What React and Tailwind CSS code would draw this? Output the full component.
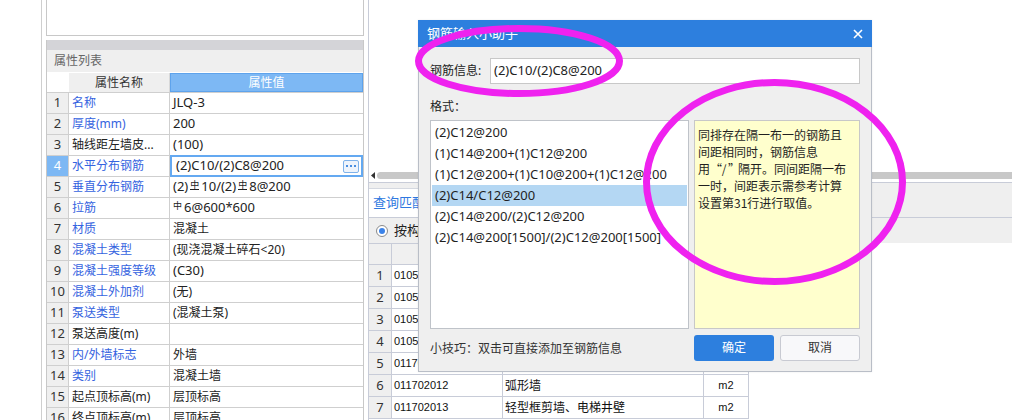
import React from "react";

const leftRows = [
  ["1", "名称", true, "JLQ-3"],
  ["2", "厚度(mm)", true, "200"],
  ["3", "轴线距左墙皮...", false, "(100)"],
  ["4", "水平分布钢筋", true, "(2)C10/(2)C8@200"],
  ["5", "垂直分布钢筋", true, "SYM5"],
  ["6", "拉筋", true, "SYM6"],
  ["7", "材质", true, "混凝土"],
  ["8", "混凝土类型", true, "(现浇混凝土碎石<20)"],
  ["9", "混凝土强度等级", true, "(C30)"],
  ["10", "混凝土外加剂", true, "(无)"],
  ["11", "泵送类型", true, "(混凝土泵)"],
  ["12", "泵送高度(m)", false, ""],
  ["13", "内/外墙标志", true, "外墙"],
  ["14", "类别", true, "混凝土墙"],
  ["15", "起点顶标高(m)", false, "层顶标高"],
  ["16", "终点顶标高(m)", false, "层顶标高"],
];

const rightRows = [
  ["1", "010504001", "直形墙", "m3"],
  ["2", "010504002", "弧形墙", "m3"],
  ["3", "010504003", "短肢剪力墙", "m3"],
  ["4", "010504004", "挡土墙", "m3"],
  ["5", "011702011", "直形墙", "m2"],
  ["6", "011702012", "弧形墙", "m2"],
  ["7", "011702013", "轻型框剪墙、电梯井壁", "m2"],
];

const formats = [
  "(2)C12@200",
  "(1)C14@200+(1)C12@200",
  "(1)C12@200+(1)C10@200+(1)C12@200",
  "(2)C14/C12@200",
  "(2)C14@200/(2)C12@200",
  "(2)C14@200[1500]/(2)C12@200[1500]",
];

function Sym({ base }) {
  return (
    <span
      className={
        base
          ? "mx-[2px] inline-block relative -top-[3px] text-[9px] leading-[9px] border-b border-[#222] [font-family:'Noto_Sans_CJK_SC',sans-serif]"
          : "mr-[2px] inline-block relative -top-[3px] text-[9px] leading-[9px] [font-family:'Noto_Sans_CJK_SC',sans-serif]"
      }
    >
      中
    </span>
  );
}

function Value({ v }) {
  if (v === "SYM5")
    return (
      <span className="text-[13px]">
        (2)
        <Sym base />
        10/(2)
        <Sym base />
        8@200
      </span>
    );
  if (v === "SYM6")
    return (
      <span className="text-[13px]">
        <Sym />
        6@600*600
      </span>
    );
  const cjk = /[\u4e00-\u9fff]/.test(v);
  return <span className={cjk ? "text-[12px]" : "text-[13px]"}>{v}</span>;
}

function LeftPanel() {
  return (
    <div className="ml-[4px] w-[318px] shrink-0 flex flex-col">
      <div className="h-[36px] shrink-0 border-x border-b border-[#c8c8c8] bg-white" />
      <div className="mt-[4px] flex-1 shrink-0 flex flex-col border-x border-[#c8c8c8]">
        <div className="h-[10px] shrink-0 bg-[#d4d4d8]" />
        <div className="h-[22px] shrink-0 bg-[#efefef] pl-[7px] text-[12px] leading-[22px] text-[#666]">
          属性列表
        </div>
        <div className="h-[1px] shrink-0 bg-white" />
        <div className="h-[20px] shrink-0 flex border-b border-[#cfcfcf]">
          <div className="w-[22px] bg-white" />
          <div className="w-[101px] bg-[#efefef] border-r border-[#d8d8d8] flex items-center justify-center text-[12px] text-[#333]">
            属性名称
          </div>
          <div className="flex-1 bg-[#7db8f4] border border-[#5ea3ec] flex items-center justify-center text-[12px] text-white">
            属性值
          </div>
        </div>
        {leftRows.map(([n, name, blue, v]) => {
          const active = n === "4";
          return (
            <div key={n} className="h-[21px] shrink-0 flex border-b border-[#cfcfcf]">
              <div
                className={
                  active
                    ? "w-[22px] bg-[#7db8f4] text-white border-r border-[#cfcfcf] flex items-center justify-center text-[13px]"
                    : "w-[22px] bg-[#efefef] text-[#333] border-r border-[#cfcfcf] flex items-center justify-center text-[13px]"
                }
              >
                {n}
              </div>
              <div
                className={
                  blue
                    ? "w-[101px] border-r border-[#cfcfcf] pl-[3px] flex items-center text-[12px] text-[#3563e0] whitespace-nowrap overflow-hidden"
                    : "w-[101px] border-r border-[#cfcfcf] pl-[3px] flex items-center text-[12px] text-[#222] whitespace-nowrap overflow-hidden"
                }
              >
                {name}
              </div>
              {active ? (
                <div className="flex-1 relative flex items-center justify-between pl-[6px] pr-[4px] text-[#222]">
                  <div className="absolute -top-[1px] -bottom-[1px] left-0 right-0 border-2 border-[#64a9f1]" />
                  <Value v={v} />
                  <div className="w-[16px] h-[13px] rounded-[2px] border border-[#7fb2ea] bg-[#eef4fc] flex items-center justify-center gap-[2px]">
                    <span className="w-[2px] h-[2px] bg-[#4a8ee0]" />
                    <span className="w-[2px] h-[2px] bg-[#4a8ee0]" />
                    <span className="w-[2px] h-[2px] bg-[#4a8ee0]" />
                  </div>
                </div>
              ) : (
                <div className="flex-1 pl-[3px] flex items-center text-[#222] whitespace-nowrap overflow-hidden">
                  <Value v={v} />
                </div>
              )}
            </div>
          );
        })}
      </div>
    </div>
  );
}

function RightPanel() {
  return (
    <div className="ml-[4px] flex-1 flex flex-col border-l border-[#c8ccd8]">
      <div className="h-[171px] shrink-0 bg-white" />
      <div className="h-[8px] shrink-0 flex items-center pl-[2px]">
        <svg width="4" height="7" viewBox="0 0 4 7">
          <path d="M4 0 L0 3.5 L4 7 Z" fill="#333" />
        </svg>
        <div className="ml-[2px] flex-1 h-[7px] rounded-l-full bg-[#c8c8c8]" />
      </div>
      <div className="h-[3px] shrink-0" />
      <div className="h-[35px] shrink-0 border-t border-[#c8ccd8] bg-[#efefef] pt-[5px] flex">
        <div className="w-[96px] bg-white border-t border-r border-[#d4d8e0] pl-[4px] flex items-center text-[13px] text-[#2f78e0] whitespace-nowrap">
          查询匹配清单
        </div>
      </div>
      <div className="h-[26px] shrink-0 border-t border-[#c8ccd8] bg-[#efefef] pl-[7px] flex items-center gap-[6px]">
        <span className="w-[12px] h-[12px] rounded-full border border-[#8a8a8a] bg-white flex items-center justify-center">
          <span className="w-[6px] h-[6px] rounded-full bg-[#3b82e8]" />
        </span>
        <span className="text-[13px] text-[#222]">按构件类型过滤</span>
      </div>
      <div className="w-[380px] shrink-0 border-t border-[#c8ccd8] flex flex-col">
        <div className="h-[21px] shrink-0 flex border-b border-[#c8ccd8] bg-[#f0f0f0] text-[12px] text-[#333]">
          <div className="w-[23px] border-r border-[#c8ccd8]" />
          <div className="w-[111px] border-r border-[#c8ccd8] flex items-center justify-center">编码</div>
          <div className="w-[201px] border-r border-[#c8ccd8] flex items-center justify-center">名称</div>
          <div className="w-[45px] border-r border-[#c8ccd8] flex items-center justify-center">单位</div>
        </div>
        {rightRows.map(([n, code, desc, unit]) => (
          <div key={n} className="h-[22px] shrink-0 flex border-b border-[#c8ccd8]">
            <div className="w-[23px] bg-[#efefef] border-r border-[#c8ccd8] flex items-center justify-center text-[13px] text-[#333]">
              {n}
            </div>
            <div className="w-[111px] border-r border-[#c8ccd8] pl-[2px] flex items-center text-[11px] text-[#111] [font-family:'Liberation_Sans',sans-serif]">
              {code}
            </div>
            <div className="w-[201px] border-r border-[#c8ccd8] pl-[2px] flex items-center text-[12px] text-[#111]">
              {desc}
            </div>
            <div className="w-[45px] border-r border-[#c8ccd8] flex items-center justify-center text-[11px] text-[#111] [font-family:'Liberation_Sans',sans-serif]">
              {unit}
            </div>
          </div>
        ))}
      </div>
    </div>
  );
}

function Dialog() {
  return (
    <div className="absolute left-[418px] top-[20px] w-[454px] h-[352px] flex flex-col shadow-[0_0_2px_rgba(0,0,0,0.08)]">
      <div className="h-[27px] shrink-0 bg-[#2d7fde] pl-[9px] pr-[9px] flex items-center justify-between">
        <span className="text-[13px] text-white">钢筋输入小助手</span>
        <svg width="10" height="10" viewBox="0 0 10 10">
          <path d="M1 1 L9 9 M9 1 L1 9" stroke="#fff" strokeWidth="1.6" />
        </svg>
      </div>
      <div className="flex-1 bg-[#efefef] border-x border-b border-[#b9bec7] pl-[11px] pr-[11px] pt-[11px] flex flex-col">
        <div className="h-[26px] shrink-0 flex items-center">
          <span className="w-[60px] text-[12px] text-[#222]">钢筋信息:</span>
          <div className="flex-1 h-[26px] bg-white border border-[#c8c8c8] pl-[3px] flex items-center text-[13px] text-[#222]">
            (2)C10/(2)C8@200
          </div>
        </div>
        <div className="mt-[13px] h-[18px] shrink-0 leading-[18px] text-[12px] text-[#222] [font-family:'Noto_Sans_CJK_SC',sans-serif]">
          格式：
        </div>
        <div className="mt-[5px] h-[209px] shrink-0 flex gap-[5px]">
          <div className="w-[259px] bg-white border border-[#bfc3c9] p-[1px] flex flex-col">
            {formats.map((f, i) => (
              <div
                key={f}
                className={
                  i === 3
                    ? "h-[21px] shrink-0 bg-[#b4d7f3] pl-[3px] flex items-center text-[13px] text-[#1f1f1f] whitespace-nowrap"
                    : "h-[21px] shrink-0 pl-[3px] flex items-center text-[13px] text-[#1f1f1f] whitespace-nowrap"
                }
              >
                {f}
              </div>
            ))}
          </div>
          <div className="w-[166px] bg-[#ffffcd] border border-[#c8c8c8] pl-[3px] pt-[5px] text-[12px] leading-[17px] text-[#1f1f1f] [font-family:'Noto_Sans_CJK_SC',sans-serif]">
            <div className="whitespace-nowrap">同排存在隔一布一的钢筋且</div>
            <div className="whitespace-nowrap">间距相同时，钢筋信息</div>
            <div className="whitespace-nowrap">
              用<span className="inline-block w-[10px] text-right">“</span>
              <span className="inline-block w-[8px] text-center">/</span>
              <span className="inline-block w-[10px] text-left">”</span>隔开。同间距隔一布
            </div>
            <div className="whitespace-nowrap">一时，间距表示需参考计算</div>
            <div className="whitespace-nowrap">设置第31行进行取值。</div>
          </div>
        </div>
        <div className="mt-[6px] h-[26px] shrink-0 flex items-center gap-[6px]">
          <span className="flex-1 text-[12px] text-[#333] [font-family:'Noto_Sans_CJK_SC',sans-serif]">
            小技巧：双击可直接添加至钢筋信息
          </span>
          <div className="w-[80px] h-[26px] rounded-[3px] bg-[#2d7fde] flex items-center justify-center text-[12px] text-white">
            确定
          </div>
          <div className="w-[80px] h-[26px] rounded-[3px] bg-[#f8f8fa] border border-[#c8cad2] flex items-center justify-center text-[12px] text-[#333]">
            取消
          </div>
        </div>
      </div>
    </div>
  );
}

export default function App() {
  return (
    <div className="relative w-[1012px] h-[420px] overflow-hidden bg-white flex [font-family:'Noto_Sans','Noto_Sans_CJK_SC',sans-serif] text-[12px] text-[#222]">
      <div className="w-[42px] h-full shrink-0 border-r border-[#cfcfcf]" />
      <LeftPanel />
      <RightPanel />
      <Dialog />
      <svg className="absolute left-0 top-0 pointer-events-none" width="1012" height="420">
        <ellipse cx="519" cy="61" rx="100.5" ry="32.5" fill="none" stroke="#ef22ef" strokeWidth="7" />
        <ellipse cx="774.5" cy="182" rx="128" ry="99.5" fill="none" stroke="#ef22ef" strokeWidth="7" />
      </svg>
    </div>
  );
}
